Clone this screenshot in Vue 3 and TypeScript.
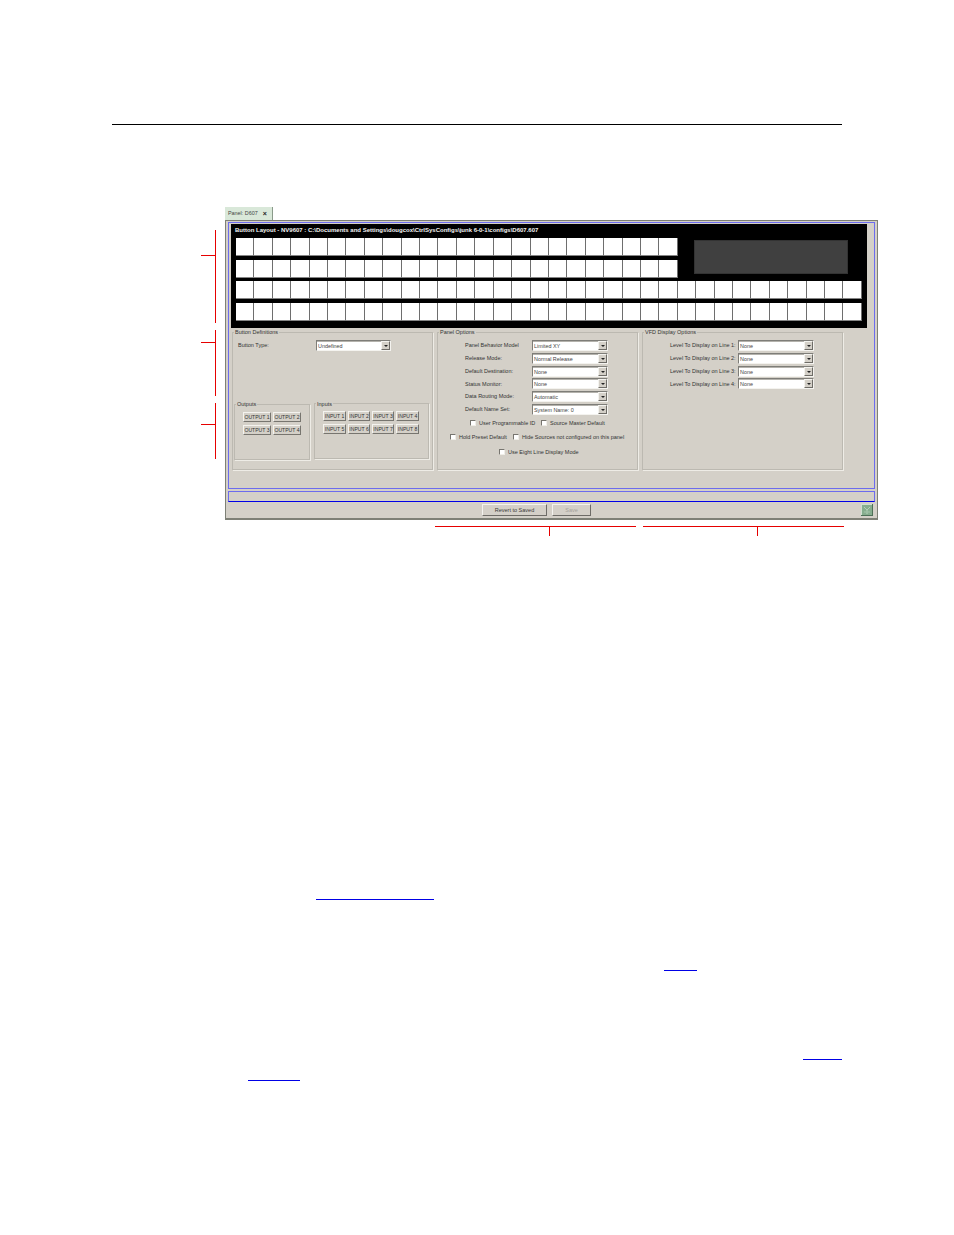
<script setup lang="ts">
const topCells = Array.from({ length: 48 }, (_, i) => i)
const bottomCells = Array.from({ length: 68 }, (_, i) => i)
const outputs = ['OUTPUT 1', 'OUTPUT 2', 'OUTPUT 3', 'OUTPUT 4']
const inputs = ['INPUT 1', 'INPUT 2', 'INPUT 3', 'INPUT 4', 'INPUT 5', 'INPUT 6', 'INPUT 7', 'INPUT 8']
const panelRows = [
  ['Panel Behavior Model', 'Limited XY'],
  ['Release Mode:', 'Normal Release'],
  ['Default Destination:', 'None'],
  ['Status Monitor:', 'None'],
  ['Data Routing Mode:', 'Automatic'],
  ['Default Name Set:', 'System Name: 0'],
]
const vfdRows = [1, 2, 3, 4].map((n) => `Level To Display on Line ${n}:`)
</script>

<template>
  <div class="page">
    <div class="rule"></div>

    <div class="shot">
      <div class="tab"><span>Panel: D607</span><span class="close">×</span></div>
      <div class="window">
        <div class="main">
          <div class="layout">
            <div class="layout-title">Button Layout - NV9607 : C:\Documents and Settings\dougcox\CtrlSysConfigs\junk 6-0-1\configs\D607.607</div>
            <div class="layout-top">
              <div class="cells cells-24"><div v-for="c in topCells" :key="c" class="cell"></div></div>
              <div class="vfd"></div>
            </div>
            <div class="cells cells-34"><div v-for="c in bottomCells" :key="c" class="cell"></div></div>
          </div>

          <div class="options">
            <section class="box">
              <h3 class="legend">Button Definitions</h3>
              <div class="type-row">
                <label class="type-label">Button Type:</label>
                <div class="select"><span>Undefined</span><i class="arrow"></i></div>
              </div>
              <div class="io">
                <section class="box outputs">
                  <h3 class="legend">Outputs</h3>
                  <div class="btn-grid out-grid"><button v-for="o in outputs" :key="o" class="mini">{{ o }}</button></div>
                </section>
                <section class="box inputs">
                  <h3 class="legend">Inputs</h3>
                  <div class="btn-grid in-grid"><button v-for="o in inputs" :key="o" class="mini">{{ o }}</button></div>
                </section>
              </div>
            </section>

            <section class="box">
              <h3 class="legend">Panel Options</h3>
              <div class="form">
                <div v-for="r in panelRows" :key="r[0]" class="form-row">
                  <label class="form-label">{{ r[0] }}</label>
                  <div class="select"><span>{{ r[1] }}</span><i class="arrow"></i></div>
                </div>
              </div>
              <div class="checks check-a">
                <label class="check w71"><i class="cb"></i>User Programmable ID</label>
                <label class="check"><i class="cb"></i>Source Master Default</label>
              </div>
              <div class="checks check-b">
                <label class="check w63"><i class="cb"></i>Hold Preset Default</label>
                <label class="check"><i class="cb"></i>Hide Sources not configured on this panel</label>
              </div>
              <div class="checks check-c">
                <label class="check"><i class="cb"></i>Use Eight Line Display Mode</label>
              </div>
            </section>

            <section class="box">
              <h3 class="legend">VFD Display Options</h3>
              <div class="form">
                <div v-for="r in vfdRows" :key="r" class="form-row">
                  <label class="form-label vfd-label">{{ r }}</label>
                  <div class="select"><span>None</span><i class="arrow"></i></div>
                </div>
              </div>
            </section>
          </div>
        </div>

        <div class="status"></div>

        <div class="actions">
          <button class="action revert">Revert to Saved</button>
          <button class="action save" disabled>Save</button>
          <svg class="corner" viewBox="0 0 12 12" aria-hidden="true">
            <rect x="0" y="0" width="12" height="12" fill="#86ad8e" />
            <path d="M0 0H12V1H1V12H0Z" fill="#cfe0d1" />
            <path d="M12 12H0V11H11V0H12Z" fill="#4f7058" />
            <path d="M3 3L6 6L9 3M6 6V10" stroke="#b4d0b9" stroke-width="1" fill="none" />
            <path d="M3 8H5M7 8H9" stroke="#a4c4aa" stroke-width="1" fill="none" />
          </svg>
        </div>
      </div>
    </div>

    <div class="links">
      <div class="link l1"></div>
      <div class="link l2"></div>
      <div class="link l3"></div>
      <div class="link l4"></div>
    </div>

    <!-- callout lines drawn over the figure -->
    <i class="call v" style="left:215px;top:230px;height:93px"></i>
    <i class="call h" style="left:201px;top:255px;width:14px"></i>
    <i class="call v" style="left:215px;top:330px;height:66px"></i>
    <i class="call h" style="left:201px;top:342px;width:14px"></i>
    <i class="call v" style="left:215px;top:403px;height:56px"></i>
    <i class="call h" style="left:201px;top:424px;width:14px"></i>
    <i class="call h" style="left:435px;top:526px;width:201px"></i>
    <i class="call v" style="left:549px;top:526px;height:10px"></i>
    <i class="call h" style="left:643px;top:526px;width:201px"></i>
    <i class="call v" style="left:757px;top:526px;height:10px"></i>
  </div>
</template>

<style>
html, body { margin: 0; background: #fff; }
</style>

<style scoped>
* { box-sizing: border-box; }
.page {
  position: relative;
  width: 954px;
  height: 1235px;
  padding-top: 124px;
  overflow: hidden;
  background: #fff;
  font-family: "Liberation Sans", Arial, sans-serif;
  font-size: 5.5px;
  line-height: 1;
  color: #333;
}
.rule { height: 1px; margin: 0 112px; background: #000; }

.shot { width: 653px; margin: 82px 0 0 225px; }
.tab {
  display: flex;
  align-items: center;
  gap: 5px;
  width: 48px;
  height: 13px;
  padding-left: 3px;
  background: #d9e8d9;
  border-right: 1px solid #8a9a8a;
  color: #444;
  font-size: 5.4px;
}
.close { font-weight: 700; font-size: 7px; color: #222; }

.window {
  display: flex;
  flex-direction: column;
  height: 300px;
  padding: 1px 2px 0;
  background: #d4d0c8;
  border: 1px solid #7e8076;
  border-width: 1px 1.5px 2px 1.5px;
}
.main {
  height: 267px;
  padding: 1px 7px 0 2px;
  border: 1px solid #6c6cee;
}

.layout {
  display: flex;
  flex-direction: column;
  gap: 3.5px;
  height: 104px;
  padding: 0 0 0 5px;
  background: #000;
}
.layout-title {
  height: 7.5px;
  margin: 3px 0 0 -1px;
  color: #f4f4f4;
  font-weight: 700;
  font-size: 6px;
  line-height: 6px;
  white-space: nowrap;
}
.layout-top { display: flex; }
.cells { display: grid; row-gap: 3.5px; grid-auto-rows: 18px; }
.cells-24 { grid-template-columns: repeat(24, 18.41px); }
.cells-34 { grid-template-columns: repeat(34, 18.41px); }
.cell {
  background: #fff;
  border-right: 1px solid #6e6e6e;
  border-bottom: 1px solid #858585;
}
.vfd {
  width: 154px;
  height: 34px;
  margin: 2px 0 0 16px;
  background: #404040;
  border: 1px solid #333;
}

.options {
  display: grid;
  grid-template-columns: repeat(3, 201px);
  column-gap: 4px;
  margin: 4px 0 0 1px;
}
.box {
  position: relative;
  height: 138px;
  border: 1px solid #bcb9b1;
  box-shadow: 1px 1px 0 #eeece6;
}
.legend {
  position: absolute;
  top: -3px;
  left: 1px;
  margin: 0;
  padding: 0 1px;
  background: #d4d0c8;
  font-weight: 400;
  font-size: 5.5px;
  white-space: nowrap;
}
.inputs .legend { top: -2px; }

.type-row { display: flex; align-items: center; margin-top: 7px; padding-left: 5px; }
.type-label { width: 78px; padding-top: 1px; }
.io { display: flex; gap: 4px; margin: 53px 0 0 1px; }
.outputs { width: 76px; height: 56px; }
.inputs { width: 115px; height: 56px; margin-top: -1px; }
.btn-grid { display: grid; grid-auto-rows: 10px; gap: 3px 2px; padding: 7px 0 0 8px; }
.out-grid { grid-template-columns: 28px 28px; }
.in-grid { grid-template-columns: 23px 22px 22px 23px; }
.mini {
  padding: 0;
  overflow: hidden;
  background: #d4d0c8;
  border: 1px solid;
  border-color: #f4f3ef #77756f #77756f #f4f3ef;
  color: #333;
  font: 5.1px "Liberation Sans", Arial, sans-serif;
  white-space: nowrap;
}

.form { display: flex; flex-direction: column; gap: 1.8px; margin-top: 7px; padding-left: 27px; }
.form-row { display: flex; align-items: center; height: 11px; }
.form-label { width: 67px; padding-top: 1px; white-space: nowrap; }
.vfd-label { width: 68px; }

.select {
  position: relative;
  width: 76px;
  height: 11px;
  padding: 1px 0 0 1px;
  background: #fff;
  border: 1px solid;
  border-color: #7e7d78 #f4f3ef #f4f3ef #7e7d78;
  box-shadow: inset 0 1px 0 #b4b2ac;
  font-size: 5.4px;
  line-height: 8px;
  color: #444;
  white-space: nowrap;
}
.type-row .select { width: 75px; }
.arrow {
  position: absolute;
  top: 0;
  right: 0;
  width: 9px;
  height: 9px;
  background: #d4d0c8;
  border: 1px solid;
  border-color: #f4f3ef #6e6c67 #6e6c67 #f4f3ef;
}
.arrow::after {
  content: "";
  position: absolute;
  top: 3px;
  left: 2px;
  border: 2px solid transparent;
  border-top: 2px solid #222;
  border-bottom: 0;
}

.checks { display: flex; align-items: center; height: 7px; }
.check { display: flex; align-items: center; white-space: nowrap; }
.cb {
  flex: none;
  width: 6px;
  height: 6px;
  margin-right: 3px;
  background: #fff;
  border: 1px solid;
  border-color: #77756f #f0eee8 #f0eee8 #77756f;
}
.w71 { width: 71px; }
.w63 { width: 63px; }
.check-a { margin: 5px 0 0 32px; }
.check-b { margin: 7px 0 0 12px; }
.check-c { margin: 8px 0 0 61px; }

.status {
  flex: none;
  height: 11px;
  margin-top: 2px;
  border: 1px solid #6c6cee;
  border-bottom-color: #0000e6;
}

.actions { display: flex; align-items: flex-start; padding: 2px 2px 0 254px; }
.action {
  height: 12px;
  padding: 0;
  background: #d4d0c8;
  border: 1px solid;
  border-color: #f4f3ef #6e6c67 #6e6c67 #f4f3ef;
  color: #3a3a38;
  font: 5.5px "Liberation Sans", Arial, sans-serif;
}
.revert { width: 65px; margin-right: 5px; }
.save { width: 39px; color: #a5a29b; }
.corner { width: 12px; height: 12px; margin-left: auto; }

.links { padding-top: 379px; }
.link { height: 1px; background: #0000e6; }
.l1 { width: 118px; margin-left: 316px; }
.l2 { width: 33px; margin: 70px 0 0 664px; }
.l3 { width: 39px; margin: 88px 0 0 803px; }
.l4 { width: 52px; margin: 20px 0 0 248px; }

.call { position: absolute; background: #e60000; }
.call.v { width: 1px; }
.call.h { height: 1px; }
</style>
